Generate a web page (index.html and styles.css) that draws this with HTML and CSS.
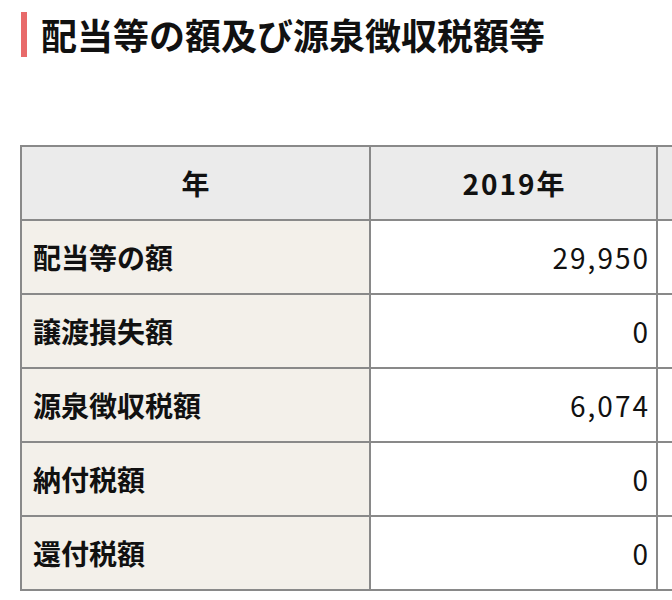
FILE: index.html
```html
<!DOCTYPE html>
<html lang="ja">
<head>
<meta charset="utf-8">
<title>配当等の額及び源泉徴収税額等</title>
<link rel="stylesheet" href="styles.css">
</head>
<body>
<div class="page">
  <h1 class="section-title">配当等の額及び源泉徴収税額等</h1>
  <div class="table-wrap">
    <table class="tax-table">
      <colgroup>
        <col class="col-label">
        <col class="col-year">
        <col class="col-year">
      </colgroup>
      <thead>
        <tr>
          <th class="head">年</th>
          <th class="head head-year">2019年</th>
          <th class="head"></th>
        </tr>
      </thead>
      <tbody>
        <tr><th class="label">配当等の額</th><td class="num">29,950</td><td class="num"></td></tr>
        <tr><th class="label">譲渡損失額</th><td class="num">0</td><td class="num"></td></tr>
        <tr><th class="label">源泉徴収税額</th><td class="num">6,074</td><td class="num"></td></tr>
        <tr><th class="label">納付税額</th><td class="num">0</td><td class="num"></td></tr>
        <tr><th class="label">還付税額</th><td class="num">0</td><td class="num"></td></tr>
      </tbody>
    </table>
  </div>
</div>
</body>
</html>
```
FILE: styles.css
```css
html, body {
  margin: 0;
  padding: 0;
  background: #ffffff;
}

body {
  font-family: "Noto Sans CJK JP", "Noto Sans", sans-serif;
  color: #111111;
}

.page {
  padding: 12px 0 0 20px;
  overflow: hidden;
}

.section-title {
  margin: 0 0 0 1px;
  padding-left: 14px;
  border-left: 6px solid #e86a6a;
  font-size: 36px;
  font-weight: 700;
  line-height: 45px;
  height: 45px;
  white-space: nowrap;
}

.table-wrap {
  margin-top: 88px;
  overflow: hidden;
}

.tax-table {
  border-collapse: collapse;
  table-layout: fixed;
  width: 923px;
}

.col-label { width: 349px; }
.col-year { width: 287px; }

.tax-table th,
.tax-table td {
  border: 2px solid #898989;
  height: 72px;
  padding: 0;
  font-size: 28px;
  vertical-align: middle;
  white-space: nowrap;
}

.head {
  background: #ebebeb;
  font-weight: 700;
  text-align: center;
}

.head-year {
  letter-spacing: 2px;
  text-indent: 2px;
}

.label {
  background: #f3f0ea;
  font-weight: 700;
  text-align: left;
  padding-left: 11px !important;
}

.num {
  background: #ffffff;
  font-weight: 400;
  text-align: right;
  padding-right: 6px !important;
  letter-spacing: 2px;
}
```
